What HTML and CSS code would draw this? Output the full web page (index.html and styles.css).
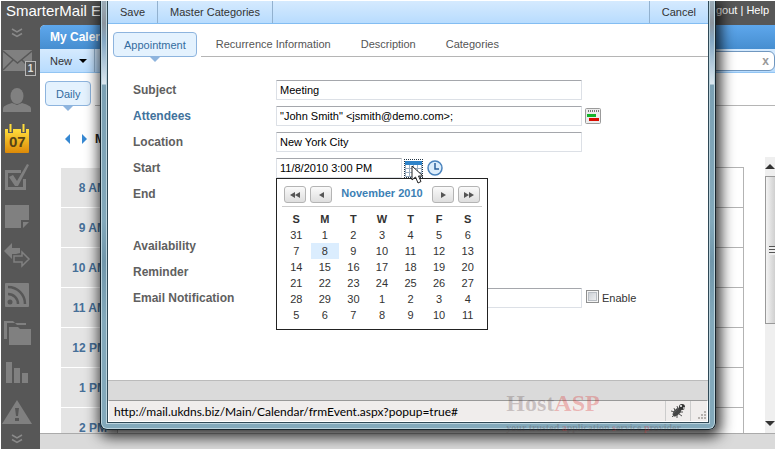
FILE: index.html
```html
<!DOCTYPE html>
<html lang="en">
	<head>
		<meta charset="UTF-8" />
		<meta name="viewport" content="width=device-width, initial-scale=1.0" />
		<title>SmarterMail</title>
		<link rel="stylesheet" href="styles.css">
	</head>
	<body>
		<div class="app">
			<header class="header">
				<span class="brand">SmarterMail En</span>
				<nav class="header-links"><a href="#">Logout</a> | <a href="#">Help</a></nav>
			</header>

			<div class="workspace">
				<nav class="sidebar">
					<a href="#" class="scroll-up" aria-label="Scroll up">
						<svg width="12" height="10" viewBox="0 0 12 10" fill="none" stroke="#8a8a8a" stroke-width="1.5"><path d="M1 1l5 3 5-3M1 5.500l5 3 5-3" /></svg>
					</a>
					<a href="#" aria-label="Mail">
						<svg width="29" height="21" viewBox="0 0 29 21"><path fill="#808080" d="M0 0h29v21H0z" /><path fill="none" stroke="#575757" stroke-width="1.5" d="M0 1l14.500 12L29 1M0 20l10-10M29 20L19 10" /></svg>
						<span class="badge">1</span>
					</a>
					<a href="#" aria-label="Contacts">
						<svg width="28" height="24" viewBox="0 0 28 24" fill="#808080"><ellipse cx="14" cy="8" rx="6.500" ry="8" /><path d="M0 24v-3c0-3 3-4 9-6l5 2 5-2c6 2 9 3 9 6v3z" /></svg>
					</a>
					<a href="#" class="day" aria-label="Calendar">
						<svg width="24" height="29" viewBox="0 0 24 29"><defs><linearGradient id="gold" x2="0" y2="1"><stop offset="0" stop-color="#ffde3c" /><stop offset="1" stop-color="#dd8a08" /></linearGradient></defs><path fill="url(#gold)" d="M0 5h3v4h5V5h8v4h5V5h3v23q0 1-1 1H1q-1 0-1-1z" /><path fill="none" stroke="#ffdc3b" stroke-width="2" d="M5.500 0v8M18.500 0v8" /></svg>
						<span class="day-number">07</span>
					</a>
					<a href="#" aria-label="Tasks">
						<svg width="26" height="28" viewBox="0 0 26 28"><path fill="none" stroke="#808080" stroke-width="3" d="M17 7.500H2.500v17h18V15" /><path fill="#808080" d="M5 13l4-2 4 6L23 0l2 1-11 21h-3z" /></svg>
					</a>
					<a href="#" aria-label="Notes">
						<svg width="24" height="24" viewBox="0 0 24 24" fill="#808080"><path d="M0 0h24v15h-8v8H0zM18 17h6l-6 6z" /></svg>
					</a>
					<a href="#" aria-label="Sync">
						<svg width="27" height="25" viewBox="0 0 27 25"><path fill="#808080" d="M0 8l8-8v5h8v5l-4 1H8v5z" /><path fill="none" stroke="#808080" stroke-width="1.500" d="M10 13h8V9l7 7-7 7v-4h-8z" /></svg>
					</a>
					<a href="#" aria-label="RSS">
						<svg width="24" height="24" viewBox="0 0 24 24"><rect width="24" height="24" rx="1" fill="#808080" /><g fill="none" stroke="#575757" stroke-width="2.500"><path d="M3 11a10 10 0 0 1 10 10M3 4a17 17 0 0 1 17 17" /></g><circle cx="5" cy="19" r="2.500" fill="#575757" /></svg>
					</a>
					<a href="#" aria-label="Files">
						<svg width="27" height="25" viewBox="0 0 27 25" fill="#808080"><path d="M0 0h9l2 2h11v2H13l-2-2H3v16H0z" /><path d="M5 6h9l2 2h11v16H5z" /></svg>
					</a>
					<a href="#" aria-label="Reports">
						<svg width="22" height="21" viewBox="0 0 22 21" fill="#808080"><path d="M0 0h6v21H0zM8 6h6v15H8zM16 11h6v10h-6z" /></svg>
					</a>
					<a href="#" aria-label="Alerts">
						<svg width="30" height="24" viewBox="0 0 30 24"><path fill="#808080" d="M15 0l15 24H0z" /><path fill="#575757" d="M13 8h4l-1 8h-2zM13 18h4v3h-4z" /></svg>
					</a>
					<a href="#" class="scroll-down" aria-label="Scroll down">
						<svg width="12" height="10" viewBox="0 0 12 10" fill="none" stroke="#8a8a8a" stroke-width="1.5"><path d="M1 1l5 3 5-3M1 5.500l5 3 5-3" /></svg>
					</a>
				</nav>

				<main class="main">
					<h1 class="main-title">My Calendar</h1>
					<div class="main-toolbar">
						<button type="button" class="new-button">New <span class="caret"></span></button>
						<div class="search">
							<input type="text" class="search-input" aria-label="Search" />
							<button type="button" class="search-clear" aria-label="Clear search">x</button>
						</div>
					</div>
					<div class="tabs main-tabs">
						<button type="button" class="tab active">Daily</button>
						<div class="tab-line"></div>
					</div>
					<div class="schedule">
						<div class="schedule-body">
							<div class="date-nav">
								<button type="button" class="arrow-left" aria-label="Previous day"></button>
								<button type="button" class="arrow-right" aria-label="Next day"></button>
								<h2>Mon</h2>
							</div>
							<table class="hours">
								<tr><th>8 AM</th><td></td></tr>
								<tr><th>9 AM</th><td></td></tr>
								<tr><th>10 AM</th><td></td></tr>
								<tr><th>11 AM</th><td></td></tr>
								<tr><th>12 PM</th><td></td></tr>
								<tr><th>1 PM</th><td></td></tr>
								<tr><th>2 PM</th><td></td></tr>
							</table>
						</div>
						<div class="scrollbar">
							<span class="scroll-arrow up"></span>
							<div class="thumb"></div>
							<span class="scroll-arrow down"></span>
						</div>
					</div>
					<footer class="main-footer"></footer>
				</main>
			</div>

			<div class="window">
				<div class="window-content">
					<div class="toolbar">
						<button type="button">Save</button>
						<button type="button">Master Categories</button>
						<button type="button" class="cancel">Cancel</button>
					</div>
					<div class="tabs">
						<button type="button" class="tab active">Appointment</button>
						<div class="tab-line">
							<button type="button" class="tab">Recurrence Information</button>
							<button type="button" class="tab">Description</button>
							<button type="button" class="tab">Categories</button>
						</div>
					</div>

					<form class="event-form">
						<div class="row">
							<label for="subject">Subject</label>
							<input type="text" id="subject" value="Meeting" />
						</div>
						<div class="row">
							<label for="attendees" class="link">Attendees</label>
							<input type="text" id="attendees" value="&quot;John Smith&quot; &lt;jsmith@demo.com&gt;;" />
							<button type="button" class="icon-button" aria-label="Check availability">
								<svg width="16" height="16" viewBox="0 0 16 16"><rect x=".5" y=".5" width="15" height="15" rx="1" fill="#ececec" stroke="#9b9b9b" /><path stroke="#777" stroke-width="2" stroke-dasharray="1 1" d="M3 3h11" /><path fill="#12b32a" d="M2 6h9v3H2z" /><path fill="#d90b00" d="M4 10h10v3H4z" /></svg>
							</button>
						</div>
						<div class="row">
							<label for="location">Location</label>
							<input type="text" id="location" value="New York City" />
						</div>
						<div class="row">
							<label for="start">Start</label>
							<div class="date-field">
								<input type="text" id="start" class="short" value="11/8/2010 3:00 PM" />
								<button type="button" class="icon-button focused" aria-label="Pick date">
									<svg width="17" height="17" viewBox="0 0 17 17"><path fill="#fff" stroke="#9bafc3" d="M.5 1.500h16v15H.5z" /><path fill="#2e83c9" d="M0 1h17v4H0z" /><path fill="none" stroke="#9bafc3" d="M0 8.500h17M0 12.500h17M4.500 5v11M8.500 5v11M12.500 5v11" /></svg>
								</button>
								<button type="button" class="icon-button" aria-label="Pick time">
									<svg width="16" height="16" viewBox="0 0 16 16"><circle cx="8" cy="8" r="7" fill="#dcedfb" stroke="#4a83bd" stroke-width="1.5" /><path fill="none" stroke="#2b609c" stroke-width="1.500" d="M8 3v6h4" /></svg>
								</button>
								<svg class="pointer" width="14" height="20" viewBox="0 0 14 20"><path fill="#fff" stroke="#222" d="M1 1v14l3.500-3 2.500 6 3-1.500L7.500 11H12z" /></svg>

								<div class="date-picker">
									<div class="month-nav">
										<button type="button" aria-label="Previous year"><svg width="10" height="6" viewBox="0 0 10 6"><path d="M5 0v6L0 3zM10 0v6L5 3z" /></svg></button>
										<button type="button" aria-label="Previous month"><svg width="5" height="6" viewBox="0 0 5 6"><path d="M5 0v6L0 3z" /></svg></button>
										<strong>November 2010</strong>
										<button type="button" aria-label="Next month"><svg width="5" height="6" viewBox="0 0 5 6"><path d="M0 0v6l5-3z" /></svg></button>
										<button type="button" aria-label="Next year"><svg width="10" height="6" viewBox="0 0 10 6"><path d="M0 0v6l5-3zM5 0v6l5-3z" /></svg></button>
									</div>
									<table class="month">
										<thead>
											<tr><th>S</th><th>M</th><th>T</th><th>W</th><th>T</th><th>F</th><th>S</th></tr>
										</thead>
										<tbody>
											<tr><td>31</td><td>1</td><td>2</td><td>3</td><td>4</td><td>5</td><td>6</td></tr>
											<tr><td>7</td><td class="selected">8</td><td>9</td><td>10</td><td>11</td><td>12</td><td>13</td></tr>
											<tr><td>14</td><td>15</td><td>16</td><td>17</td><td>18</td><td>19</td><td>20</td></tr>
											<tr><td>21</td><td>22</td><td>23</td><td>24</td><td>25</td><td>26</td><td>27</td></tr>
											<tr><td>28</td><td>29</td><td>30</td><td>1</td><td>2</td><td>3</td><td>4</td></tr>
											<tr><td>5</td><td>6</td><td>7</td><td>8</td><td>9</td><td>10</td><td>11</td></tr>
										</tbody>
									</table>
								</div>
							</div>
						</div>
						<div class="row row-end">
							<label for="end">End</label>
							<input type="text" id="end" class="short" />
						</div>
						<div class="row">
							<label for="availability">Availability</label>
							<select id="availability" class="short"></select>
						</div>
						<div class="row">
							<label for="reminder">Reminder</label>
							<select id="reminder" class="short"></select>
						</div>
						<div class="row">
							<label for="email">Email Notification</label>
							<input type="text" id="email" />
							<label class="enable"><input type="checkbox" /> Enable</label>
						</div>
					</form>

					<div class="window-footer"></div>
					<div class="status">
						<span class="status-url">http://mail.ukdns.biz/Main/Calendar/frmEvent.aspx?popup=true#</span>
						<span class="status-bug">
							<svg width="16" height="16" viewBox="0 0 16 16"><ellipse cx="7" cy="9" rx="3" ry="5.500" transform="rotate(45 7 9)" fill="#444" /><path fill="none" stroke="#555" d="M4 5l1 3M1 8l4 1M2 14l2-2M7 15l0-3M12 13l-3-2M13 9h-3M7 3l1 3M3 11l6-6" /><circle cx="12" cy="4" r="3" fill="#333" /><circle cx="11" cy="3" r="1" fill="#fff" /><circle cx="14" cy="5" r="1" fill="#ccc" /></svg>
						</span>
						<span class="status-grip">
							<svg width="9" height="9" viewBox="0 0 9 9" fill="#b5b1ae"><path d="M7 0h2v2H7zM4 3h2v2H4zM7 3h2v2H7zM1 6h2v2H1zM4 6h2v2H4zM7 6h2v2H7z" /></svg>
						</span>
					</div>
				</div>
			</div>

			<div class="watermark">
				<div class="watermark-name">Host<em>ASP</em></div>
				<div class="watermark-tag">your trusted <em>a</em>pplication <em>s</em>ervice <em>p</em>rovider</div>
			</div>
		</div>
	</body>
</html>
```
FILE: styles.css
```css
* {
	box-sizing: border-box;
}

body {
	margin: 0;
	padding: 1px;
	height: 100vh;
	background: #fff;
	font-family: "Liberation Sans", Arial, sans-serif;
	font-size: 11px;
	color: #333;
}

button,
input,
select {
	font-family: inherit;
	font-size: 11px;
}

button {
	border: none;
	background: none;
	padding: 0;
	color: #333;
	cursor: pointer;
}

a {
	color: inherit;
	text-decoration: none;
}

svg {
	display: block;
}

.app {
	position: relative;
	display: flex;
	flex-direction: column;
	height: 100%;
	overflow: hidden;
}

.header {
	display: flex;
	justify-content: space-between;
	align-items: center;
	height: 24px;
	padding: 0 6px 6px 5px;
	background: #575757;
	color: #fff;
}

.brand {
	font-size: 15px;
}

.workspace {
	flex: 1;
	display: flex;
	min-height: 0;
	background: #575757;
}

/* Left icon bar */
.sidebar {
	width: 39px;
	display: flex;
	flex-direction: column;
}

.sidebar a {
	position: relative;
	display: flex;
	flex: none;
	justify-content: center;
	align-items: center;
	height: 39px;
	padding-right: 7px;
}

.sidebar .scroll-up,
.sidebar .scroll-down {
	height: 16px;
}

.badge {
	position: absolute;
	right: 4px;
	bottom: 4px;
	width: 11px;
	border: 1px solid #b8b8b8;
	background: #575757;
	color: #ddd;
	font-size: 10px;
	font-weight: bold;
	line-height: 13px;
	text-align: center;
}

.day-number {
	position: absolute;
	left: 8px;
	top: 14px;
	font-size: 15px;
	font-weight: bold;
	line-height: 18px;
	color: #574315;
}

/* Calendar page */
.main {
	flex: 1;
	display: flex;
	flex-direction: column;
	min-width: 0;
	border-top-left-radius: 5px;
	background: #fff;
}

.main-title {
	margin: 0;
	padding: 0 10px;
	border-top-left-radius: 5px;
	background: linear-gradient(#5ea7ec, #468ed0);
	color: #fff;
	font-size: 12px;
	line-height: 24px;
}

.main-toolbar {
	display: flex;
	justify-content: space-between;
	align-items: center;
	height: 24px;
	border-bottom: 1px solid #92c5f3;
	background: linear-gradient(#d5eafe, #b8dcfe);
}

.new-button {
	display: flex;
	align-items: center;
	gap: 7px;
	height: 23px;
	padding: 0 7px 0 10px;
	border-right: 1px solid #92b1cf;
}

.caret {
	border: 4px solid transparent;
	border-top-color: #000;
	border-bottom: 0;
}

.search {
	display: flex;
	width: 200px;
	height: 20px;
	padding: 0 5px;
	border: 1px solid #7097bf;
	border-radius: 6px;
	background: #fff;
}

.search-input {
	flex: 1;
	min-width: 0;
	border: none;
	background: none;
}

.search-clear {
	color: #999;
	font-size: 12px;
	font-weight: bold;
}

.tabs {
	display: flex;
	gap: 4px;
	padding: 8px 0 0 5px;
	height: 34px;
}

.main-tabs {
	height: 42px;
}

.tab {
	height: 24px;
	padding: 0 10px;
	color: #555;
}

.tab.active {
	position: relative;
	height: 25px;
	border: 1px solid #8db4de;
	border-radius: 4px;
	background: #e4f2fe;
	color: #336c9f;
}

.tab.active::after {
	content: "";
	position: absolute;
	left: 50%;
	top: 100%;
	margin-left: -6px;
	border: 6px solid transparent;
	border-top-color: #8db4de;
	border-bottom: 0;
}

.tab-line {
	flex: 1;
	display: flex;
	gap: 10px;
	height: 25px;
	padding-left: 5px;
	border-bottom: 1px solid #b5b5b5;
}

.schedule {
	flex: 1;
	display: flex;
	min-height: 0;
}

.schedule-body {
	flex: 1;
	min-width: 0;
	padding: 14px 21px 0;
	overflow: hidden;
}

.date-nav {
	display: flex;
	align-items: center;
	gap: 12px;
	height: 20px;
	margin-bottom: 18px;
	padding-left: 4px;
}

.date-nav h2 {
	margin: 0 0 0 -4px;
	font-size: 12px;
	color: #222;
}

.arrow-left,
.arrow-right {
	border: 5px solid transparent;
}

.arrow-left {
	border-left-width: 0;
	border-right-color: #3688d2;
}

.arrow-right {
	border-right-width: 0;
	border-left-color: #3688d2;
}

.hours {
	width: 100%;
	border-collapse: separate;
	border-spacing: 0;
}

.hours th {
	width: 56px;
	height: 40px;
	padding: 0 10px 0 0;
	border-top: 1px solid #fff;
	background: #e4e4e4;
	color: #466f98;
	font-size: 12px;
	text-align: right;
}

.hours td {
	border: 1px solid #b3b3b3;
	border-bottom: 0;
}

.scrollbar {
	display: flex;
	flex-direction: column;
	align-items: flex-end;
	width: 10px;
	margin-top: 42px;
	background: #efefef;
	overflow: hidden;
}

.scroll-arrow {
	margin: 7px 0;
	border: 5px solid transparent;
}

.scroll-arrow.up {
	border-top: 0;
	border-bottom-color: #333;
}

.scroll-arrow.down {
	margin-top: auto;
	border-bottom: 0;
	border-top-color: #333;
}

.thumb {
	width: 100%;
	height: 148px;
	border: 1px solid #999;
	border-right: none;
	background:
		repeating-linear-gradient(#555 0 1px, #eee 1px 3px) right center / 6px 9px no-repeat,
		linear-gradient(90deg, #f4f4f4, #cfcfcf);
}

.main-footer {
	height: 16px;
	border-top: 1px solid #aaa;
	background: #dadada;
}

/* Popup window */
.window {
	position: absolute;
	top: 0;
	right: 59px;
	bottom: 19px;
	left: 99px;
	padding: 0 6px 6px;
	border: 1px solid #17242c;
	border-top: none;
	border-radius: 0 0 7px 7px;
	background: linear-gradient(#9bacb9 0, #8c959e 22px, #86a9c4 40px, #dbe7ef 83px, #7ca1b4 84px, #83a9bb 220px, #7197ab 260px, #83a9bb 320px);
	box-shadow: inset 0 -1px 0 #bbd3dd, inset 1px 0 0 #bbd3dd, inset -1px 0 0 #bbd3dd, 2px 4px 14px 3px rgba(0, 0, 0, 0.8);
}

.window-content {
	display: flex;
	flex-direction: column;
	height: 100%;
	border: 1px solid #2f4956;
	border-top: none;
	box-shadow: 0 0 0 1px #bbd3dd;
	background: #fff;
}

.toolbar {
	display: flex;
	height: 23px;
	border-bottom: 1px solid #83bdf2;
	background: linear-gradient(#d5eafe, #b8dcfe);
}

.toolbar button {
	padding: 0 12px;
	border-right: 1px solid #92b1cf;
}

.toolbar .cancel {
	margin-left: auto;
	border-right: none;
	border-left: 1px solid #92b1cf;
}

.event-form {
	flex: 1;
	display: flex;
	flex-direction: column;
	gap: 6px;
	padding: 22px 25px 0;
}

.row {
	display: flex;
	align-items: center;
	height: 20px;
}

.row-end {
	margin-bottom: 26px;
}

.row > label {
	width: 143px;
	color: #606060;
	font-size: 12px;
	font-weight: bold;
}

.row .link {
	color: #41729c;
}

.row input[type="text"],
.row select {
	width: 306px;
	height: 20px;
	padding: 0 3px;
	border: 1px solid #dce0e6;
	border-top-color: #a5a7ac;
	border-radius: 1px;
	background: #fff;
	color: #000;
}

.row input.short,
.row select.short {
	width: 126px;
}

.icon-button {
	margin-left: 3px;
}

.icon-button.focused {
	outline: 1px dotted #234;
}

.date-field {
	position: relative;
	display: flex;
	align-items: center;
}

.date-field .icon-button + .icon-button {
	margin-left: 5px;
}

.pointer {
	position: absolute;
	left: 135px;
	top: 7px;
	z-index: 2;
}

.date-picker {
	position: absolute;
	top: 100%;
	left: 0;
	z-index: 1;
	width: 212px;
	padding: 7px 5px 6px;
	border: 1px solid #222;
	background: #fff;
}

.month-nav {
	display: flex;
	gap: 4px;
	height: 21px;
	padding: 0 2px;
	border-bottom: 1px solid #ccc;
}

.month-nav button {
	display: flex;
	justify-content: center;
	align-items: center;
	width: 22px;
	height: 17px;
	border: 1px solid #b4b4b4;
	border-radius: 3px;
	background: linear-gradient(#fafafa, #dedede);
	fill: #555;
}

.month-nav strong {
	flex: 1;
	color: #3c7fb5;
	line-height: 14px;
	text-align: center;
}

.month {
	width: 100%;
	margin-top: 4px;
	border-collapse: collapse;
	table-layout: fixed;
}

.month th,
.month td {
	height: 16px;
	padding: 0;
	line-height: 16px;
	text-align: center;
}

.month .selected {
	background: #dbedfe;
}

.row .enable {
	display: flex;
	align-items: center;
	gap: 3px;
	width: auto;
	margin-left: 4px;
	font-size: 11px;
	font-weight: normal;
	color: #333;
}

.enable input {
	appearance: none;
	width: 13px;
	height: 13px;
	margin: 0 0 4px;
	border: 1px solid #8e8f8f;
	background: linear-gradient(135deg, #c4c9d0, #f6f6f6);
	box-shadow: inset 0 0 0 1px #f4f4f4, inset 0 0 0 2px #b9bec4;
}

.window-footer {
	height: 20px;
	border-top: 1px solid #bbb;
	background: #dadada;
}

.status {
	display: flex;
	align-items: stretch;
	height: 22px;
	border: 1px solid #fff;
	border-top-color: #999;
	background: #f0edec;
	color: #000;
	font-family: Lato, "Open Sans", sans-serif;
	font-size: 12px;
	line-height: 22px;
}

.status-url {
	flex: 1;
	padding-left: 5px;
}

.status-bug,
.status-grip {
	display: flex;
	border-left: 1px solid #ccc;
}

.status-bug {
	align-items: center;
	padding: 0 4px;
}

.status-grip {
	align-items: flex-end;
	padding: 0 1px 1px 6px;
}

.watermark {
	position: absolute;
	right: 94px;
	bottom: 14px;
	color: rgba(80, 60, 60, 0.25);
	font-family: "Liberation Serif", serif;
}

.watermark em {
	color: rgba(220, 40, 40, 0.3);
	font-style: normal;
}

.watermark-name {
	font-size: 24px;
	font-weight: bold;
	line-height: 36px;
}

.watermark-tag {
	font-size: 10px;
	font-weight: bold;
	line-height: 14px;
}
```
